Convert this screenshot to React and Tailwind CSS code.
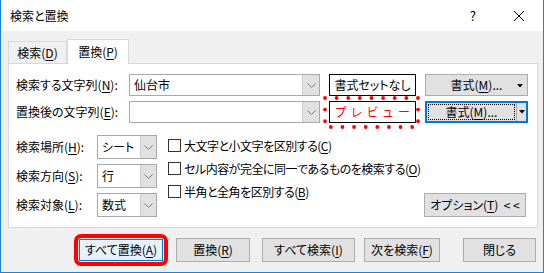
import React from 'react';

const U = ({ children }) => <span className="underline underline-offset-[2px]">{children}</span>;

const Chevron = () => (
  <svg width="9" height="5" viewBox="0 0 9 5">
    <path d="M0.5 0.5 L4.5 4.5 L8.5 0.5" fill="none" stroke="#7a7a7a" strokeWidth="1" />
  </svg>
);

const Caret = () => (
  <svg width="6" height="4" viewBox="0 0 6 4">
    <path d="M0 0 L6 0 L3 3.5 Z" fill="#000" />
  </svg>
);

const Combo = ({ value, width, height, arrow }) => (
  <div className={`flex shrink-0 ${width} ${height} border border-[#a9a9a9] bg-white`}>
    <div className="flex-1 flex items-center pl-[4px]">{value}</div>
    <div className={`${arrow} bg-[#e1e1e1] border-l border-[#cfcfcf] flex items-center justify-center`}>
      <Chevron />
    </div>
  </div>
);

const Btn = ({ children, className = '' }) => (
  <div className={`h-[24px] shrink-0 whitespace-nowrap flex items-center justify-center bg-[#e1e1e1] border border-[#adadad] ${className}`}>
    {children}
  </div>
);

const Check = ({ children }) => (
  <div className="flex items-center h-[23px] whitespace-nowrap">
    <div className="w-[13px] h-[13px] shrink-0 border border-[#333] bg-white" />
    <span className="ml-[3px] tracking-[-0.5px]">{children}</span>
  </div>
);

export default function App() {
  return (
    <div className="w-[544px] h-[273px] overflow-hidden bg-[#f0f0f0] border-x border-b border-[#1883d7] text-[12px] leading-none text-black font-['Noto_Sans_CJK_JP','Noto_Sans',sans-serif] [font-feature-settings:'palt']">
      {/* title bar */}
      <div className="h-[31px] bg-white flex items-center pl-[9px] pr-[19px]">
        <span>検索と置換</span>
        <span className="ml-auto text-[13px]">?</span>
        <svg className="ml-[38px]" width="10" height="10" viewBox="0 0 10 10">
          <path d="M0 0 L10 10 M10 0 L0 10" stroke="#000" strokeWidth="1" />
        </svg>
      </div>

      <div className="px-[7px] pt-[8px]">
        {/* tabs */}
        <div className="flex items-end h-[25px] -mb-px relative z-10">
          <div className="w-[59px] h-[22px] mb-px border border-b-0 border-[#d9d9d9] bg-[#f0f0f0] flex items-center justify-center">
            検索(<U>D</U>)
          </div>
          <div className="w-[62px] h-[25px] border border-b-0 border-[#d9d9d9] bg-white flex items-center justify-center">
            置換(<U>P</U>)
          </div>
        </div>

        {/* panel */}
        <div className="w-[530px] h-[165px] border border-[#d9d9d9] bg-white pt-[10px] pl-[7px] pr-[11px]">
          <div className="flex items-center h-[22px]">
            <span className="w-[113px] shrink-0 whitespace-nowrap">検索する文字列(<U>N</U>):</span>
            <Combo value="仙台市" width="w-[191px]" height="h-[22px]" arrow="w-[17px]" />
            <div className="ml-[9px] w-[87px] h-[22px] shrink-0 whitespace-nowrap border border-black flex items-center justify-center">
              書式セットなし
            </div>
            <Btn className="ml-[9px] w-[103px] !h-[22px] relative">
              書式(<U>M</U>)...
              <span className="absolute right-[4px] top-[9px] flex"><Caret /></span>
            </Btn>
          </div>

          <div className="flex items-center h-[22px] mt-[5px]">
            <span className="w-[113px] shrink-0 whitespace-nowrap">置換後の文字列(<U>E</U>):</span>
            <Combo value="" width="w-[191px]" height="h-[22px]" arrow="w-[17px]" />
            <div className="ml-[9px] relative shrink-0">
              <div className="w-[87px] h-[22px] border border-black flex items-center justify-center whitespace-nowrap text-[#ff0000] tracking-[5px] pl-[5px]">
                プレビュー
              </div>
              <svg className="absolute left-[-6px] top-[-5px] overflow-visible" width="98" height="33" viewBox="0 0 98 33">
                <rect x="2" y="2" width="93" height="29" fill="none" stroke="#ff0000" strokeWidth="3.8" strokeLinecap="round" strokeDasharray="0 11.62" />
              </svg>
            </div>
            <div className="ml-[9px] w-[103px] h-[22px] shrink-0 whitespace-nowrap border-2 border-[#0078d7] bg-[#e1e1e1] flex">
              <div className="flex-1 m-[1px] border border-dotted border-black flex items-center justify-center">
                書式(<U>M</U>)...
              </div>
              <div className="w-[10px] border-l border-[#adadad] flex items-center justify-center">
                <Caret />
              </div>
            </div>
          </div>

          <div className="flex mt-[12px]">
            <div className="flex flex-col gap-[5px] shrink-0">
              <div className="flex items-center h-[24px]">
                <span className="w-[81px] whitespace-nowrap">検索場所(<U>H</U>):</span>
                <Combo value="シート" width="w-[60px]" height="h-[24px]" arrow="w-[16px]" />
              </div>
              <div className="flex items-center h-[24px]">
                <span className="w-[81px] whitespace-nowrap">検索方向(<U>S</U>):</span>
                <Combo value="行" width="w-[60px]" height="h-[24px]" arrow="w-[16px]" />
              </div>
              <div className="flex items-center h-[24px]">
                <span className="w-[81px] whitespace-nowrap">検索対象(<U>L</U>):</span>
                <Combo value="数式" width="w-[60px]" height="h-[24px]" arrow="w-[16px]" />
              </div>
            </div>
            <div className="ml-[11px] -mt-px flex flex-col shrink-0">
              <Check>大文字と小文字を区別する(<U>C</U>)</Check>
              <Check>セル内容が完全に同一であるものを検索する(<U>O</U>)</Check>
              <Check>半角と全角を区別する(<U>B</U>)</Check>
            </div>
            <Btn className="ml-auto self-end w-[102px]">
              オプション(<U>T</U>)&nbsp;&nbsp;&lt; &lt;
            </Btn>
          </div>
        </div>

        {/* bottom buttons */}
        <div className="flex items-center pl-[66px] mt-[6px]">
          <div className="w-[94px] shrink-0 whitespace-nowrap border-[4px] border-[#ff0000] rounded-[7px] p-px">
            <div className="h-[22px] bg-[#e5f1fb] border border-[#0078d7] flex items-center justify-center">
              すべて置換(<U>A</U>)
            </div>
          </div>
          <Btn className="ml-[8px] w-[74px]">置換(<U>R</U>)</Btn>
          <Btn className="ml-[12px] w-[93px]">すべて検索(<U>I</U>)</Btn>
          <Btn className="ml-[9px] w-[76px]">次を検索(<U>F</U>)</Btn>
          <Btn className="ml-[23px] w-[73px]">閉じる</Btn>
        </div>
      </div>
    </div>
  );
}
